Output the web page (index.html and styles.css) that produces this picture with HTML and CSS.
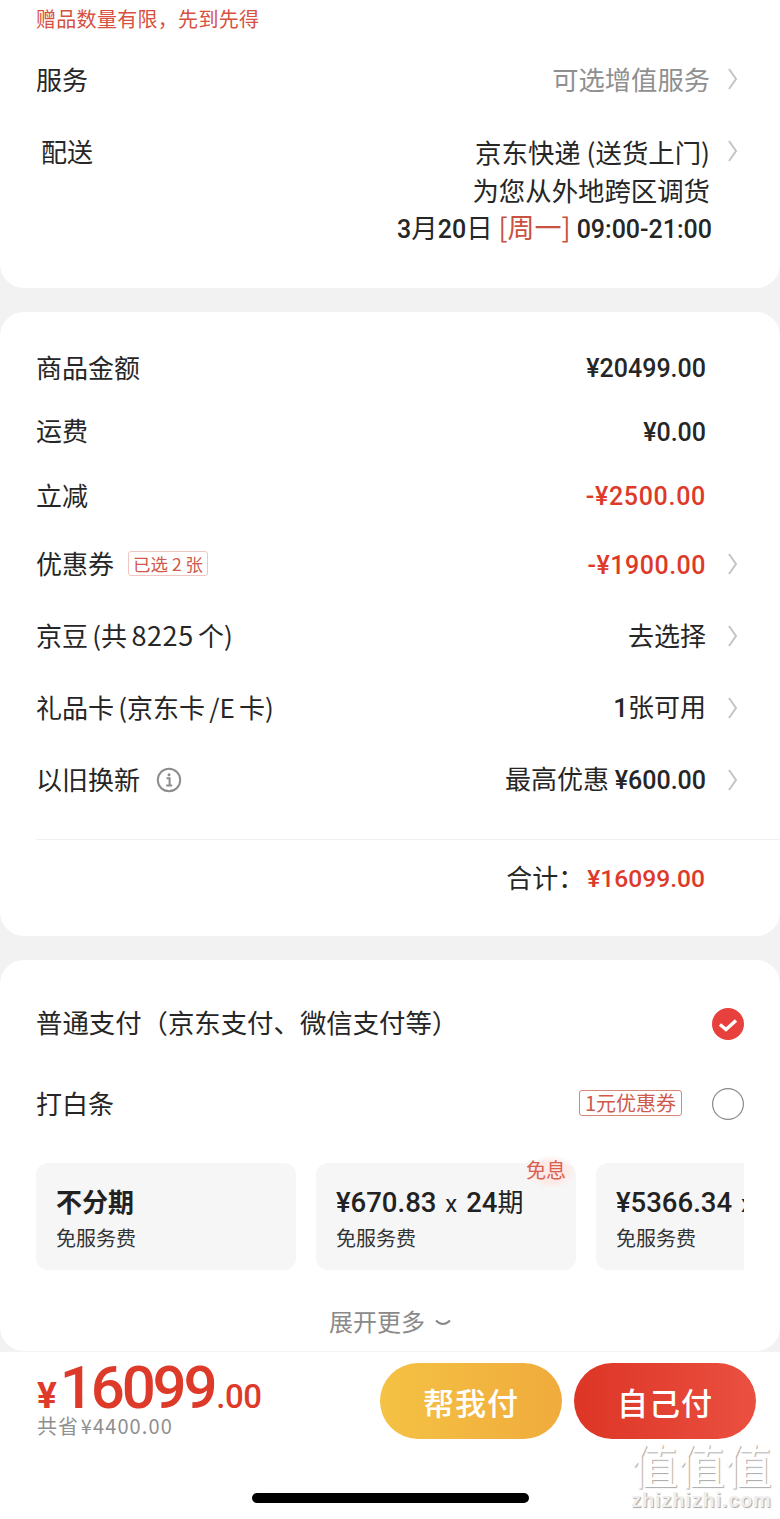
FILE: index.html
```html
<!DOCTYPE html>
<html lang="zh-CN">
<head>
<meta charset="utf-8">
<title>订单结算</title>
<link rel="stylesheet" href="styles.css">
</head>
<body>
<main class="page">
  <section class="card card-top">
    <p class="gift-note">赠品数量有限，先到先得</p>
    <div class="row row-service">
      <span class="label">服务</span>
      <span class="value muted">可选增值服务</span>
      <svg class="chev" viewBox="0 0 12 24"><path d="M2 2l7 10-7 10"/></svg>
    </div>
    <div class="row-delivery">
      <span class="label label-delivery">配送</span>
      <div class="delivery-lines">
        <span>京东快递 (送货上门)</span>
        <span>为您从外地跨区调货</span>
        <span class="delivery-date"><b class="num">3</b>月<b class="num">20</b>日 <i class="week">[周一]</i> <b class="num">09:00-21:00</b></span>
      </div>
      <svg class="chev chev-delivery" viewBox="0 0 12 24"><path d="M2 2l7 10-7 10"/></svg>
    </div>
  </section>

  <section class="card card-price">
    <div class="row row-goods"><span class="label">商品金额</span><span class="value num amount">¥20499.00</span><span class="chev-space"></span></div>
    <div class="row row-ship"><span class="label">运费</span><span class="value num amount">¥0.00</span><span class="chev-space"></span></div>
    <div class="row row-cut"><span class="label">立减</span><span class="value num amount red">-¥2500.00</span><span class="chev-space"></span></div>
    <div class="row row-coupon"><span class="label">优惠券</span><span class="tag">已选 2 张</span><span class="value num amount red">-¥1900.00</span><svg class="chev" viewBox="0 0 12 24"><path d="M2 2l7 10-7 10"/></svg></div>
    <div class="row row-std"><span class="label label-beans">京豆 (共 <span class="beans">8225</span> 个)</span><span class="value">去选择</span><svg class="chev" viewBox="0 0 12 24"><path d="M2 2l7 10-7 10"/></svg></div>
    <div class="row row-std"><span class="label label-tight">礼品卡 (京东卡 /E 卡)</span><span class="value"><b class="num">1</b>张可用</span><svg class="chev" viewBox="0 0 12 24"><path d="M2 2l7 10-7 10"/></svg></div>
    <div class="row row-std">
      <span class="label">以旧换新</span>
      <svg class="info" viewBox="0 0 26 26"><circle cx="13" cy="13" r="11.2"/><circle class="info-dot" cx="13" cy="7.8" r="1.5"/><path d="M10.6 11.2h3v7.2M10.2 18.6h6"/></svg>
      <span class="value">最高优惠 <b class="num old-price">¥600.00</b></span>
      <svg class="chev" viewBox="0 0 12 24"><path d="M2 2l7 10-7 10"/></svg>
    </div>
    <div class="total">
      <span class="total-label">合计：</span><b class="num red">¥16099.00</b>
    </div>
  </section>

  <section class="card card-pay">
    <div class="row row-pay-a">
      <span class="label">普通支付（京东支付、微信支付等）</span>
      <svg class="radio" viewBox="0 0 32 32"><circle cx="16" cy="16" r="16" fill="#e8403c"/><path d="M8 16.5l6 5 10-9" fill="none" stroke="#fff" stroke-width="3.4"/></svg>
    </div>
    <div class="row row-pay-b">
      <span class="label">打白条</span>
      <span class="coupon-tag">1元优惠券</span>
      <svg class="radio" viewBox="0 0 32 32"><circle cx="16" cy="16" r="15.4" fill="#fff" stroke="#8a8a8a" stroke-width="1.2"/></svg>
    </div>
    <div class="plans">
      <div class="plan"><b class="plan-title">不分期</b><span class="plan-sub">免服务费</span></div>
      <div class="plan"><b class="plan-title"><span class="num">¥670.83</span> <span class="times">x</span> <span class="num">24</span><span class="period">期</span></b><span class="plan-sub">免服务费</span><span class="free">免息</span></div>
      <div class="plan"><b class="plan-title"><span class="num">¥5366.34</span> <span class="times">x</span> <span class="num">3</span><span class="period">期</span></b><span class="plan-sub">免服务费</span></div>
    </div>
    <div class="more">展开更多
      <svg class="more-ic" viewBox="0 0 16 8"><path d="M1 1.5c4 4.5 10 4.5 14 0"/></svg>
    </div>
  </section>

  <footer class="bar">
    <div class="bar-main">
      <div class="price">
        <div class="price-big"><span class="cur">¥</span><span class="int">16099</span><span class="dec">.00</span></div>
        <div class="saved">共省 ¥4400.00</div>
      </div>
      <button class="btn btn-help">帮我付</button>
      <button class="btn btn-self">自己付</button>
    </div>
    <div class="home"></div>
    <div class="mark"><span class="mark-cn">值值值</span><span class="mark-en">zhizhizhi.com</span></div>
  </footer>
</main>
</body>
</html>
```
FILE: styles.css
```css
* { box-sizing: border-box; }
html, body { margin: 0; padding: 0; }
body {
  width: 780px;
  height: 1519px;
  overflow: hidden;
  background: #f2f2f2;
  color: #262626;
  font-family: "Noto Sans CJK SC", "Noto Sans", sans-serif;
  font-size: 26px;
}
.page { display: flex; flex-direction: column; gap: 24px; }
.card { background: #fff; padding: 0 36px; }
.row { display: flex; align-items: center; }
.label { line-height: 36px; margin-bottom: 2px; white-space: nowrap; }
.value { margin-left: auto; line-height: 36px; margin-bottom: 2px; white-space: nowrap; }
.muted { color: #8f8f8f; }
.red { color: #dd3a2a; }
.num { font-family: Roboto, "Liberation Sans", sans-serif; font-weight: 500; }
.chev { width: 12px; height: 24px; margin-left: 21px; margin-right: 5px; flex: none; }
.chev path { fill: none; stroke: #c4c4c4; stroke-width: 2; }
.chev-space { width: 38px; flex: none; }
.label-beans { word-spacing: -1.5px; }
.beans { font-size: 27px; letter-spacing: 0.6px; }
.label-tight { word-spacing: -1.6px; }
.old-price { font-size: 25px; }

.card-top { height: 288px; border-radius: 0 0 24px 24px; }
.gift-note { margin: 0; padding-top: 6px; font-size: 20px; line-height: 26px; letter-spacing: 0.3px; color: #d8503f; }
.row-service { margin-top: 29px; height: 36px; }
.row-service .label, .row-service .value { margin-bottom: 0; }
.row-service .value { font-size: 26.3px; }
.row-service .chev { margin-left: 17px; }
.row-delivery { display: flex; align-items: flex-start; margin-top: 36px; }
.row-delivery .label { margin-bottom: 0; }
.label-delivery { padding-left: 5px; }
.delivery-lines {
  margin-left: auto;
  display: flex;
  flex-direction: column;
  align-items: flex-end;
  font-size: 26.4px;
  line-height: 37.5px;
  white-space: nowrap;
}
.delivery-date { margin-right: -2px; }
.delivery-date b { font-size: 25px; font-weight: 500; }
.week { color: #c8513f; font-style: normal; font-size: 27px; }
.chev-delivery { margin-top: 6px; margin-left: 17px; }

.card-price { height: 624px; border-radius: 24px; padding-top: 38px; }
.row-goods { height: 36px; }
.row-ship { height: 36px; margin-top: 28px; }
.row-ship .label { margin-bottom: 4px; }
.row-cut { height: 36px; margin-top: 28px; }
.row-coupon { height: 36px; margin-top: 32px; }
.row-std { height: 36px; margin-top: 36px; }
.amount { font-size: 25px; margin-bottom: 0; padding-top: 2px; }
.amount.red { letter-spacing: 0.7px; }
.row-coupon .amount { padding-top: 4px; letter-spacing: 0.5px; }
.tag {
  margin: 0 0 2px 14px;
  padding: 0 4px;
  height: 25px;
  line-height: 23px;
  font-size: 17.5px;
  color: #cf5a4c;
  border: 1px solid #efc7c0;
  border-radius: 3px;
  white-space: nowrap;
}
.info { width: 26px; height: 26px; margin-left: 16px; flex: none; }
.info circle { fill: none; stroke: #8c8c8c; stroke-width: 2; }
.info .info-dot { fill: #8c8c8c; stroke: none; }
.info path { fill: none; stroke: #8c8c8c; stroke-width: 2; }
.total {
  margin: 41px -36px 0 0;
  height: 78px;
  padding: 19px 75px 0 0;
  border-top: 1px solid #f0f0f0;
  display: flex;
  justify-content: flex-end;
  line-height: 36px;
}
.total-label { margin-right: 3px; }
.total b { font-size: 24.6px; padding-top: 2px; }

.card-pay { height: 391px; border-radius: 24px; overflow: hidden; padding-top: 46px; }
.row-pay-a { justify-content: space-between; height: 36px; }
.row-pay-a .label { margin-bottom: 4px; font-size: 26.4px; }
.row-pay-b { height: 36px; margin-top: 44px; }
.radio { width: 32px; height: 32px; flex: none; }
.coupon-tag {
  margin: 0 30px 2px auto;
  padding: 0 5px;
  height: 26px;
  line-height: 24px;
  font-size: 20px;
  color: #cf5a4c;
  border: 1px solid #d9867a;
  border-radius: 3px;
  white-space: nowrap;
}
.plans { display: flex; gap: 20px; margin-top: 33px; padding-top: 8px; overflow: hidden; }
.plan {
  position: relative;
  flex: 0 0 260px;
  height: 107px;
  padding: 20px 20px 0;
  background: #f6f6f6;
  border-radius: 12px;
}
.plan-title {
  display: block;
  height: 36px;
  font-size: 26px;
  line-height: 36px;
  font-weight: 700;
  color: #222;
  white-space: nowrap;
  word-spacing: 3px;
}
.plan-title .num { font-size: 27.5px; font-weight: 500; }
.times { font-family: Roboto, sans-serif; font-weight: 400; font-size: 24px; }
.period { font-weight: 400; font-size: 26px; }
.plan-sub { display: block; margin-top: 5px; font-size: 20px; line-height: 28px; color: #333; }
.free {
  position: absolute;
  right: 0;
  top: -8px;
  width: 50px;
  height: 34px;
  padding-top: 1px;
  text-align: left;
  font-size: 20px;
  line-height: 28px;
  color: #d9604f;
  background: radial-gradient(closest-side, #fdeae7 62%, rgba(253, 234, 231, 0) 100%);
}
.more {
  display: flex;
  justify-content: center;
  align-items: center;
  gap: 10px;
  margin-top: 33px;
  font-size: 24px;
  line-height: 36px;
  color: #8a8a8a;
}
.more-ic { width: 16px; height: 8px; margin-top: 3px; }
.more-ic path { fill: none; stroke: #8a8a8a; stroke-width: 2; }

.bar {
  position: relative;
  margin-top: -24px;
  height: 168px;
  background: #fff;
  border-top: 1px solid #f4f4f4;
}
.bar-main { display: flex; align-items: flex-start; height: 87px; padding: 11px 24px 0 37px; }
.price { margin-right: auto; }
.price-big { display: flex; align-items: baseline; height: 50px; line-height: 50px; color: #dd3a2a; font-family: Roboto, sans-serif; font-weight: 500; white-space: nowrap; }
.cur { font-size: 37px; font-weight: 700; margin-right: 3px; }
.int { font-size: 60px; letter-spacing: -3.2px; }
.dec { font-size: 33px; margin-left: 2px; letter-spacing: -0.5px; }
.saved { margin-top: 0; font-size: 20px; line-height: 26px; color: #8f8f8f; white-space: nowrap; letter-spacing: 1.1px; word-spacing: -4px; }
.btn {
  width: 182px;
  height: 76px;
  padding: 0;
  border: 0;
  border-radius: 38px;
  color: #fff;
  font-family: "Noto Sans CJK SC", sans-serif;
  font-size: 31px;
  font-weight: 500;
  letter-spacing: 1px;
}
.btn-help { background: linear-gradient(90deg, #f4c244, #f0ab3c); margin-right: 12px; }
.btn-self { background: linear-gradient(90deg, #dd3526, #ea5040); }
.home {
  width: 277px;
  height: 10px;
  margin: 54px auto 0;
  border-radius: 5px;
  background: #000;
}
.mark {
  position: absolute;
  right: 8px;
  bottom: 8px;
  display: flex;
  flex-direction: column;
  align-items: center;
  color: #fff;
  text-shadow: 1px 1px 1px #a8a8a8;
}
.mark-cn { font-size: 47px; line-height: 50px; }
.mark-en { font-size: 20px; line-height: 22px; font-family: "Liberation Sans", sans-serif; font-weight: 700; letter-spacing: 0.8px; color: #eee; }
```
